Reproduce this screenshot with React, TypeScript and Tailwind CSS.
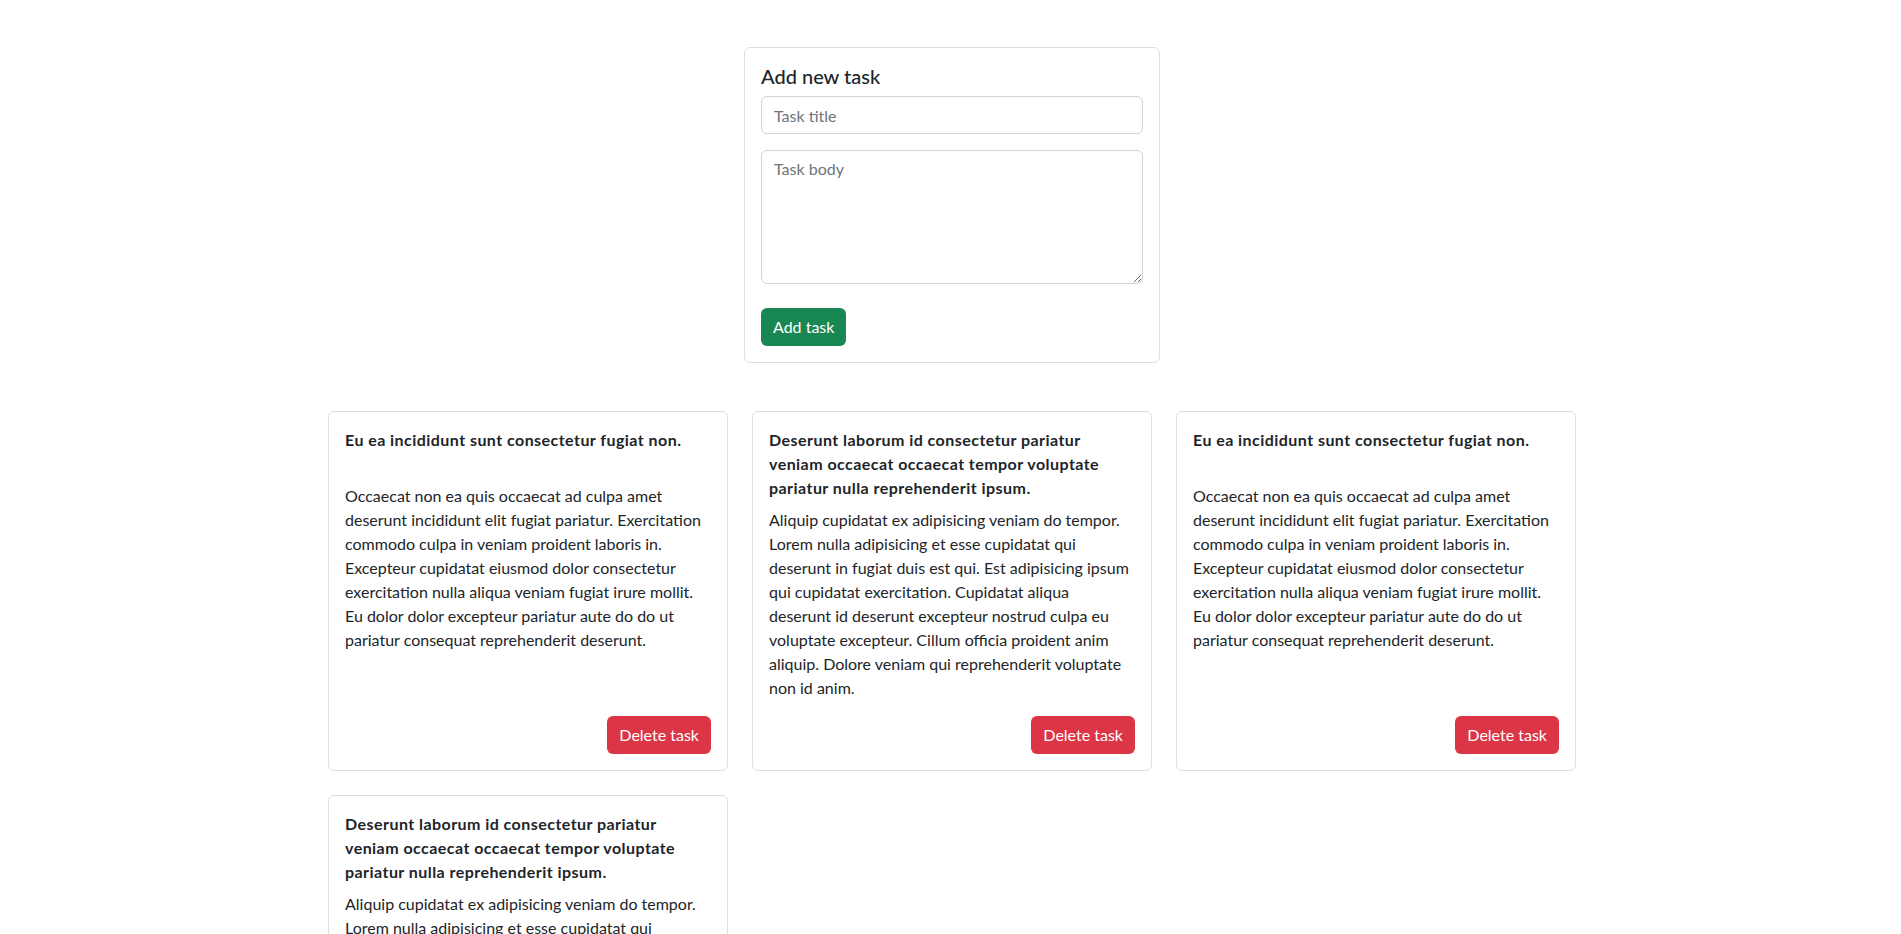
import React from "react";

const tasks = [
  {
    title: "Eu ea incididunt sunt consectetur fugiat non.",
    body: "Occaecat non ea quis occaecat ad culpa amet deserunt incididunt elit fugiat pariatur. Exercitation commodo culpa in veniam proident laboris in. Excepteur cupidatat eiusmod dolor consectetur exercitation nulla aliqua veniam fugiat irure mollit. Eu dolor dolor excepteur pariatur aute do do ut pariatur consequat reprehenderit deserunt.",
  },
  {
    title: "Deserunt laborum id consectetur pariatur veniam occaecat occaecat tempor voluptate pariatur nulla reprehenderit ipsum.",
    body: "Aliquip cupidatat ex adipisicing veniam do tempor. Lorem nulla adipisicing et esse cupidatat qui deserunt in fugiat duis est qui. Est adipisicing ipsum qui cupidatat exercitation. Cupidatat aliqua deserunt id deserunt excepteur nostrud culpa eu voluptate excepteur. Cillum officia proident anim aliquip. Dolore veniam qui reprehenderit voluptate non id anim.",
  },
  {
    title: "Eu ea incididunt sunt consectetur fugiat non.",
    body: "Occaecat non ea quis occaecat ad culpa amet deserunt incididunt elit fugiat pariatur. Exercitation commodo culpa in veniam proident laboris in. Excepteur cupidatat eiusmod dolor consectetur exercitation nulla aliqua veniam fugiat irure mollit. Eu dolor dolor excepteur pariatur aute do do ut pariatur consequat reprehenderit deserunt.",
  },
  {
    title: "Deserunt laborum id consectetur pariatur veniam occaecat occaecat tempor voluptate pariatur nulla reprehenderit ipsum.",
    body: "Aliquip cupidatat ex adipisicing veniam do tempor. Lorem nulla adipisicing et esse cupidatat qui deserunt in fugiat duis est qui. Est adipisicing ipsum qui cupidatat exercitation. Cupidatat aliqua deserunt id deserunt excepteur nostrud culpa eu voluptate excepteur. Cillum officia proident anim aliquip. Dolore veniam qui reprehenderit voluptate non id anim.",
  },
];

export default function App() {
  return (
    <div className="min-h-screen bg-white pl-[3px] text-[16px] leading-[24px] text-[#212529] [font-family:Lato,sans-serif]">
      <div className="mx-auto w-[1248px] pt-[47px] pb-12">
        <div className="mx-auto w-[416px] rounded-[6px] border border-[#dfdfdf] p-4">
          <h5 className="mb-2 text-[20px] font-medium leading-[24px]">Add new task</h5>
          <input
            type="text"
            placeholder="Task title"
            className="mb-4 block h-[38px] w-full rounded-[6px] border border-[#ced4da] px-3 py-[6px] text-[16px] leading-[24px] outline-none placeholder:text-[#6c757d]"
          />
          <textarea
            rows={5}
            placeholder="Task body"
            className="mb-6 block h-[134px] w-full rounded-[6px] border border-[#ced4da] px-3 py-[6px] text-[16px] leading-[24px] outline-none placeholder:text-[#6c757d]"
          />
          <button className="h-[38px] rounded-[6px] bg-[#198754] px-3 text-[16px] leading-[24px] text-white">
            Add task
          </button>
        </div>
        <div className="mt-12 grid grid-cols-3 gap-6">
          {tasks.map((t, i) => (
            <div key={i} className="flex flex-col rounded-[6px] border border-[#dfdfdf] p-4">
              <h6 className="mb-2 min-h-[48px] text-[16px] font-bold leading-[24px] tracking-[0.45px]">
                {t.title}
              </h6>
              <p className="mb-4">{t.body}</p>
              <div className="mt-auto flex justify-end">
                <button className="h-[38px] rounded-[6px] bg-[#dc3545] px-3 text-[16px] leading-[24px] text-white">
                  Delete task
                </button>
              </div>
            </div>
          ))}
        </div>
      </div>
    </div>
  );
}
